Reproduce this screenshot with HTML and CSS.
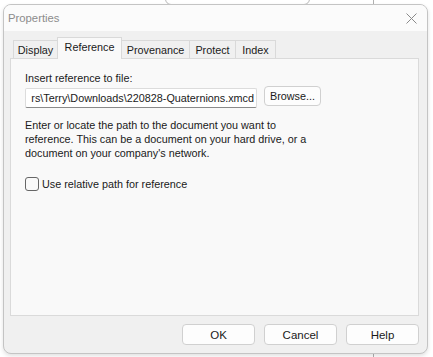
FILE: index.html
```html
<!DOCTYPE html>
<html lang="en">
<head>
  <meta charset="UTF-8">
  <title>Properties</title>
  <link rel="stylesheet" href="styles.css">
</head>
<body>

  <div class="behind-window"></div>
  <div class="behind-line"></div>

  <div class="dialog">
    <div class="titlebar">
      <div class="title">Properties</div>
      <svg class="close" width="11" height="11" viewBox="0 0 11 11">
        <path d="M0.5 0.5 L10.5 10.5 M10.5 0.5 L0.5 10.5" stroke="#8a8a8a" stroke-width="1" fill="none"/>
      </svg>
    </div>

    <div class="dialog-body">
      <div class="tabbar">
        <div class="tab tab-display">Display</div>
        <div class="tab tab-reference active">Reference</div>
        <div class="tab tab-provenance">Provenance</div>
        <div class="tab tab-protect">Protect</div>
        <div class="tab tab-index">Index</div>
      </div>

      <div class="panel">
        <div class="field-label">Insert reference to file:</div>
        <div class="path-row">
          <div class="path-input"><span>rs\Terry\Downloads\220828-Quaternions.xmcd</span></div>
          <div class="btn browse">Browse...</div>
        </div>
        <p class="hint">Enter or locate the path to the document you want to<br>reference. This can be a document on your hard drive, or a<br>document on your company's network.</p>
        <label class="check-row">
          <span class="checkbox"></span>
          <span>Use relative path for reference</span>
        </label>
      </div>

      <div class="footer">
        <div class="btn action">OK</div>
        <div class="btn action">Cancel</div>
        <div class="btn action">Help</div>
      </div>
    </div>
  </div>

</body>
</html>
```

FILE: styles.css
```css
body {
  margin: 0;
  width: 433px;
  height: 357px;
  overflow: hidden;
  background-color: #ffffff;
  font-family: 'Liberation Sans', Arial, sans-serif;
  font-size: 10.8px;
  color: #1a1a1a;
  position: relative;
}
.behind-window {
  position: absolute;
  left: 165px;
  top: -10px;
  width: 143px;
  height: 13px;
  border: 1px solid #b8b8b8;
  border-radius: 6px;
  background: #ffffff;
}
.behind-line {
  position: absolute;
  left: 373px;
  top: 0;
  width: 1px;
  height: 357px;
  background: #b0b0b0;
}
.dialog {
  position: relative;
  margin: 4px 0 0 3px;
  width: 423px;
  height: 348px;
  border: 1px solid #c4c4c4;
  border-radius: 8px;
  background-color: #f0f0f0;
  box-shadow: 0 2px 4px rgba(0,0,0,0.12);
  display: flex;
  flex-direction: column;
  overflow: hidden;
}
.titlebar {
  height: 26px;
  background-color: #fbfbfb;
  display: flex;
  align-items: center;
  padding: 0 10px 0 4px;
}
.title {
  flex: 1;
  color: #8c8c8c;
  font-size: 11.3px;
}
.close {
  margin-top: 1px;
}
.dialog-body {
  flex: 1;
  display: flex;
  flex-direction: column;
  padding: 8px 8px 0 6px;
}
.tabbar {
  display: flex;
  height: 19px;
  padding-left: 3px;
  align-items: flex-end;
}
.tab {
  height: 18px;
  box-sizing: border-box;
  border: 1px solid #d9d9d9;
  border-bottom: none;
  background-color: #f0f0f0;
  display: flex;
  align-items: center;
  justify-content: center;
  margin-right: -1px;
}
.tab.active {
  height: 22px;
  margin-bottom: -1px;
  background-color: #f9f9f9;
  position: relative;
  z-index: 1;
  align-items: flex-start;
  padding-top: 3px;
}
.tab-display { width: 45px; }
.tab-reference { width: 65px; }
.tab-provenance { width: 69px; }
.tab-protect { width: 47px; }
.tab-index { width: 41px; }
.panel {
  height: 258px;
  box-sizing: border-box;
  border: 1px solid #dadada;
  background-color: #f9f9f9;
  padding: 12px 14px 0 14px;
}
.field-label {
  height: 14px;
  line-height: 14px;
}
.path-row {
  display: flex;
  align-items: flex-start;
  margin-top: 1px;
}
.path-input {
  width: 232px;
  height: 20px;
  margin-top: 2px;
  box-sizing: border-box;
  border: 1px solid #dcdcdc;
  border-bottom-color: #8a8a8a;
  background: #ffffff;
  border-radius: 2px;
  line-height: 18px;
  padding: 0 2px;
  white-space: nowrap;
  overflow: hidden;
  display: flex;
  justify-content: flex-end;
}
.btn {
  box-sizing: border-box;
  border: 1px solid #d0d0d0;
  border-radius: 4px;
  background-color: #fdfdfd;
  display: flex;
  align-items: center;
  justify-content: center;
}
.browse {
  width: 57px;
  height: 20px;
  margin-left: 7px;
}
.hint {
  margin: 10px 0 0 0;
  line-height: 14px;
  white-space: nowrap;
}
.check-row {
  display: flex;
  align-items: center;
  margin-top: 17px;
}
.checkbox {
  width: 12px;
  height: 12px;
  border: 1px solid #666;
  border-radius: 3px;
  background: #f9f9f9;
  margin-right: 3px;
}
.footer {
  display: flex;
  justify-content: flex-end;
  gap: 9px;
  padding-top: 8px;
}
.btn.action {
  width: 73px;
  height: 21px;
  font-size: 11.5px;
}
```
